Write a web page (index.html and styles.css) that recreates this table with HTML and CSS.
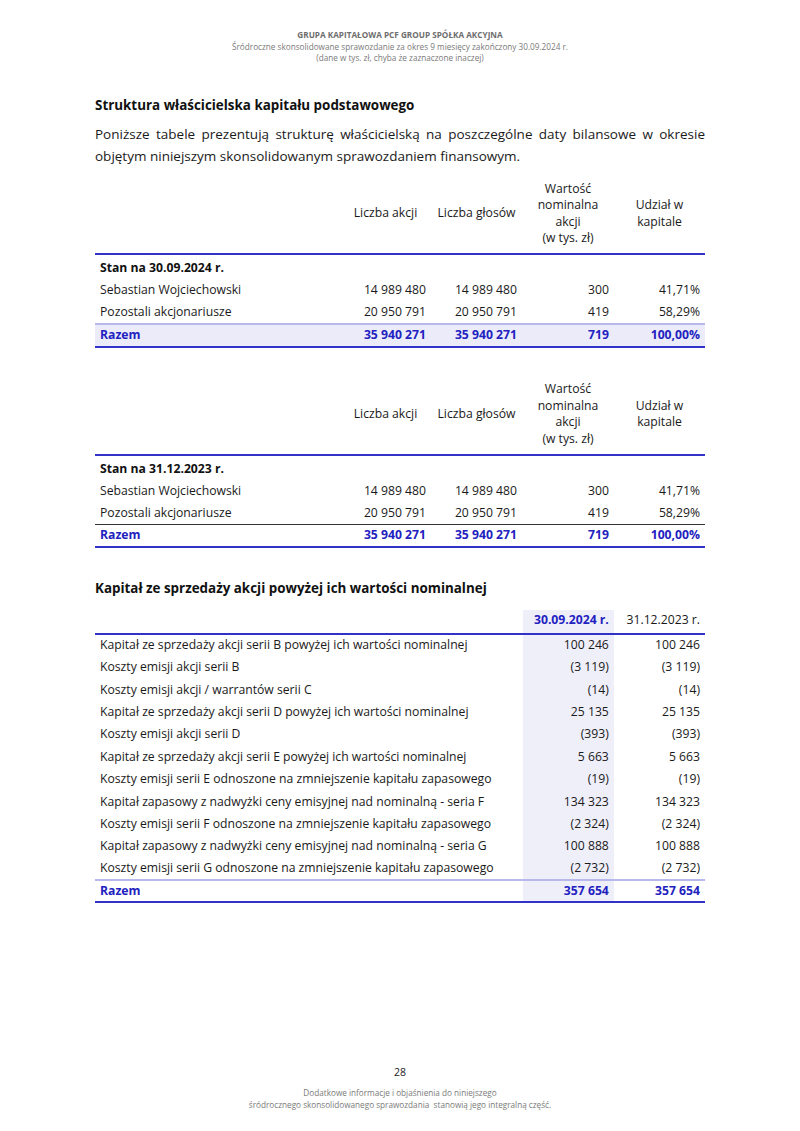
FILE: index.html
```html
<!DOCTYPE html>
<html lang="pl">
<head>
<meta charset="utf-8">
<link rel="stylesheet" href="styles.css">
</head>
<body>
<div class="page">
  <header class="doc-head">
    <div class="doc-title">GRUPA KAPITAŁOWA PCF GROUP SPÓŁKA AKCYJNA</div>
    <div>Śródroczne skonsolidowane sprawozdanie za okres 9 miesięcy zakończony 30.09.2024 r.</div>
    <div>(dane w tys. zł, chyba że zaznaczone inaczej)</div>
  </header>

  <main class="content">
    <h2 class="sec-title first">Struktura właścicielska kapitału podstawowego</h2>
    <p class="lead">Poniższe tabele prezentują strukturę właścicielską na poszczególne daty bilansowe w okresie objętym niniejszym skonsolidowanym sprawozdaniem finansowym.</p>

    <table class="tbl own">
      <colgroup><col class="c-label"><col class="c-num"><col class="c-num"><col class="c-num3"><col class="c-num"></colgroup>
      <thead>
        <tr><th></th><th>Liczba akcji</th><th>Liczba głosów</th><th>Wartość<br>nominalna<br>akcji<br>(w tys. zł)</th><th>Udział w<br>kapitale</th></tr>
      </thead>
      <tbody>
        <tr class="stan"><td>Stan na 30.09.2024 r.</td><td></td><td></td><td></td><td></td></tr>
        <tr><td>Sebastian Wojciechowski</td><td>14 989 480</td><td>14 989 480</td><td>300</td><td>41,71%</td></tr>
        <tr><td>Pozostali akcjonariusze</td><td>20 950 791</td><td>20 950 791</td><td>419</td><td>58,29%</td></tr>
        <tr class="total shaded"><td>Razem</td><td>35 940 271</td><td>35 940 271</td><td>719</td><td>100,00%</td></tr>
      </tbody>
    </table>

    <table class="tbl own second">
      <colgroup><col class="c-label"><col class="c-num"><col class="c-num"><col class="c-num3"><col class="c-num"></colgroup>
      <thead>
        <tr><th></th><th>Liczba akcji</th><th>Liczba głosów</th><th>Wartość<br>nominalna<br>akcji<br>(w tys. zł)</th><th>Udział w<br>kapitale</th></tr>
      </thead>
      <tbody>
        <tr class="stan"><td>Stan na 31.12.2023 r.</td><td></td><td></td><td></td><td></td></tr>
        <tr><td>Sebastian Wojciechowski</td><td>14 989 480</td><td>14 989 480</td><td>300</td><td>41,71%</td></tr>
        <tr><td>Pozostali akcjonariusze</td><td>20 950 791</td><td>20 950 791</td><td>419</td><td>58,29%</td></tr>
        <tr class="total plain"><td>Razem</td><td>35 940 271</td><td>35 940 271</td><td>719</td><td>100,00%</td></tr>
      </tbody>
    </table>

    <h2 class="sec-title second-title">Kapitał ze sprzedaży akcji powyżej ich wartości nominalnej</h2>

    <table class="tbl cap">
      <colgroup><col class="c-wide"><col class="c-num hl"><col class="c-num"></colgroup>
      <thead>
        <tr><th></th><th class="cur">30.09.2024 r.</th><th>31.12.2023 r.</th></tr>
      </thead>
      <tbody>
        <tr><td>Kapitał ze sprzedaży akcji serii B powyżej ich wartości nominalnej</td><td class="cur">100 246</td><td>100 246</td></tr>
        <tr><td>Koszty emisji akcji serii B</td><td class="cur">(3 119)</td><td>(3 119)</td></tr>
        <tr><td>Koszty emisji akcji / warrantów serii C</td><td class="cur">(14)</td><td>(14)</td></tr>
        <tr><td>Kapitał ze sprzedaży akcji serii D powyżej ich wartości nominalnej</td><td class="cur">25 135</td><td>25 135</td></tr>
        <tr><td>Koszty emisji akcji serii D</td><td class="cur">(393)</td><td>(393)</td></tr>
        <tr><td>Kapitał ze sprzedaży akcji serii E powyżej ich wartości nominalnej</td><td class="cur">5 663</td><td>5 663</td></tr>
        <tr><td>Koszty emisji serii E odnoszone na zmniejszenie kapitału zapasowego</td><td class="cur">(19)</td><td>(19)</td></tr>
        <tr><td>Kapitał zapasowy z nadwyżki ceny emisyjnej nad nominalną - seria F</td><td class="cur">134 323</td><td>134 323</td></tr>
        <tr><td>Koszty emisji serii F odnoszone na zmniejszenie kapitału zapasowego</td><td class="cur">(2 324)</td><td>(2 324)</td></tr>
        <tr><td>Kapitał zapasowy z nadwyżki ceny emisyjnej nad nominalną - seria G</td><td class="cur">100 888</td><td>100 888</td></tr>
        <tr><td>Koszty emisji serii G odnoszone na zmniejszenie kapitału zapasowego</td><td class="cur">(2 732)</td><td>(2 732)</td></tr>
        <tr class="total shaded-line"><td>Razem</td><td class="cur">357 654</td><td>357 654</td></tr>
      </tbody>
    </table>
  </main>

  <footer class="doc-foot">
    <div class="page-no">28</div>
    <div class="foot-note">Dodatkowe informacje i objaśnienia do niniejszego<br>śródrocznego skonsolidowanego sprawozdania&nbsp; stanowią jego integralną część.</div>
  </footer>
</div>
</body>
</html>
```

FILE: styles.css
```css
* { box-sizing: border-box; }
html, body { margin: 0; padding: 0; background: #fff; }
body {
  font-family: "Open Sans", "Noto Sans", sans-serif;
  color: #1a1a1a;
}
.page {
  width: 800px;
  height: 1131px;
  display: flex;
  flex-direction: column;
  padding: 29px 95px 0;
}
.doc-head {
  text-align: center;
  font-size: 8.2px;
  line-height: 11.5px;
  color: #7a7a7a;
}
.doc-title { font-weight: 700; color: #6e6e6e; }

.content { flex: 1; }

.sec-title {
  font-size: 13.4px;
  font-weight: 700;
  margin: 0;
  color: #111;
  line-height: 20px;
}
.sec-title.first { margin-top: 31px; }
.lead {
  font-size: 13.5px;
  line-height: 22px;
  text-align: justify;
  margin: 8px 0 0;
  color: #1a1a1a;
}

.tbl {
  width: 610px;
  border-collapse: collapse;
  table-layout: fixed;
  font-size: 12.2px;
  color: #1a1a1a;
}
.tbl td, .tbl th {
  padding: 0 5px;
  height: 22.4px;
  line-height: 16px;
  white-space: nowrap;
}
.tbl td:not(:first-child) { text-align: right; }
.tbl th {
  font-weight: 400;
  text-align: center;
  vertical-align: middle;
  line-height: 16.6px;
}
.tbl thead tr { border-bottom: 2px solid #3232c8; }

.own { margin-top: 14px; }
.own.second { margin-top: 33px; }
.own th { padding-top: 0; padding-bottom: 6px; height: 73px; }
.c-label { width: 245px; }
.c-num { width: 91px; }
.c-num3 { width: 92px; }
.own .stan td { font-weight: 700; color: #111; height: 25px; padding-top: 3px; vertical-align: top; }
.own .stan td:first-child { padding-top: 5px; }

.total td { font-weight: 700; color: #2222c0; }
.total.shaded td { background: #ebebfa; border-top: 2px solid #b8b8ea; border-bottom: 2px solid #3232c8; height: 23.5px; }
.total.plain td { border-top: 1px solid #333; border-bottom: 2px solid #3232c8; }

.sec-title.second-title { margin-top: 30px; }
.sec-title + .cap { margin-top: 12px; }
.cap thead th { height: 24px; padding-bottom: 2px; }
.cap thead th:not(:first-child) { text-align: right; }
.c-wide { width: 427px; }
.cap .cur { background: #efeffa; }
.cap th.cur { font-weight: 700; color: #2222c0; }
.total.shaded-line td { border-top: 2px solid #b8b8ea; border-bottom: 2px solid #3232c8; }

.doc-foot {
  text-align: center;
  padding-bottom: 21px;
}
.page-no { font-size: 10.5px; color: #222; line-height: 14px; }
.foot-note {
  margin-top: 8px;
  font-size: 8.2px;
  line-height: 11.5px;
  color: #7a7a7a;
}
```
